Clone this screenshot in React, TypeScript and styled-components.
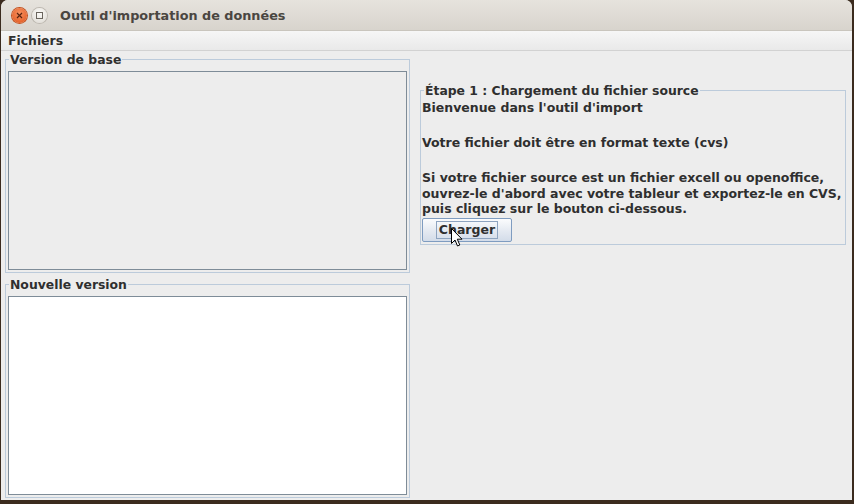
import styled, { createGlobalStyle } from "styled-components";

const GlobalStyle = createGlobalStyle`
  html, body {
    margin: 0;
    padding: 0;
    width: 854px;
    height: 504px;
    overflow: hidden;
    background: #3b2b1e;
    font-family: "DejaVu Sans", "Liberation Sans", sans-serif;
  }
`;

const Window = styled.div`
  margin-left: 1px;
  width: 851px;
  height: 500px;
  display: flex;
  flex-direction: column;
  background: #ededed;
  border-radius: 7px 7px 0 0;
  overflow: hidden;
`;

const TitleBar = styled.div`
  height: 30px;
  display: flex;
  align-items: center;
  padding-left: 11px;
  gap: 5px;
  background: linear-gradient(#e6e3dd, #d8d4cd);
  border-bottom: 1px solid #c9c5bd;
`;

const CircleBtn = styled.div<{ $close?: boolean }>`
  width: 15px;
  height: 15px;
  border-radius: 50%;
  display: flex;
  align-items: center;
  justify-content: center;
  background: ${(p) =>
    p.$close
      ? "radial-gradient(circle at 50% 35%, #f6905e, #e0551c)"
      : "radial-gradient(circle at 50% 35%, #fbfaf8, #dcd8d1)"};
  box-shadow: 0 0 0 1px ${(p) => (p.$close ? "#c4521f" : "#bdb8b0")};
`;

const Title = styled.div`
  margin-left: 8px;
  font-size: 12.8px;
  font-weight: bold;
  color: #4a4641;
  font-family: "DejaVu Sans", sans-serif;
`;

const MenuBar = styled.div`
  height: 19px;
  display: flex;
  align-items: center;
  padding-left: 7px;
  background: linear-gradient(#f6f6f6, #e9e9e9);
  border-bottom: 1px solid #d2d2d2;
`;

const MenuItem = styled.span`
  font-size: 12.4px;
  font-weight: bold;
  color: #2f2f2f;
`;

const Content = styled.div`
  flex: 1;
  display: grid;
  grid-template-columns: 405px 426px;
  column-gap: 10px;
  padding: 8px 0 2px 4px;
`;

const LeftColumn = styled.div`
  display: flex;
  flex-direction: column;
  gap: 11px;
`;

const Titled = styled.div<{ $fill?: boolean }>`
  position: relative;
  border: 1px solid #bccbdb;
  display: flex;
  flex-direction: column;
  flex: ${(p) => (p.$fill ? 1 : "none")};
`;

const Legend = styled.span`
  position: absolute;
  top: -8px;
  left: 3px;
  padding: 0 1px;
  background: #ededed;
  font-size: 12.4px;
  line-height: 16px;
  font-weight: bold;
  color: #2f2f2f;
`;

const TextArea = styled.div<{ $white?: boolean }>`
  flex: 1;
  margin: 11px 2px 2px 2px;
  border: 1px solid #7e8c98;
  background: ${(p) => (p.$white ? "#ffffff" : "#ededed")};
`;

const RightColumn = styled.div`
  padding-top: 31px;
`;

const StepBody = styled.div`
  padding: 9px 2px 2px 1px;
  display: flex;
  flex-direction: column;
  align-items: flex-start;
`;

const Label = styled.div<{ $gap?: number }>`
  margin-top: ${(p) => p.$gap ?? 0}px;
  font-size: 12.5px;
  line-height: 15.5px;
  font-weight: bold;
  color: #2f2f2f;
  white-space: nowrap;
`;

const Button = styled.button`
  position: relative;
  margin-top: 1px;
  width: 90px;
  height: 24px;
  padding: 2px;
  border: 1px solid #7f9cc0;
  border-radius: 2px;
  background: linear-gradient(#fbfcfd, #e4e9f1 55%, #d3dce9);
  display: flex;
  align-items: center;
  justify-content: center;
  font-family: "DejaVu Sans", sans-serif;
  font-size: 12.5px;
  font-weight: bold;
  color: #2f2f2f;
`;

const Focus = styled.span`
  border: 1px solid #8ea4c0;
  padding: 1px 2px;
  line-height: 14px;
`;

const Cursor = styled.svg`
  position: absolute;
  left: 28px;
  top: 9px;
`;

export default function App() {
  return (
    <>
      <GlobalStyle />
      <Window>
        <TitleBar>
          <CircleBtn $close>
            <svg width="7" height="7" viewBox="0 0 7 7">
              <path d="M1 1 L6 6 M6 1 L1 6" stroke="#5a2410" strokeWidth="1.2" />
            </svg>
          </CircleBtn>
          <CircleBtn>
            <svg width="7" height="7" viewBox="0 0 7 7">
              <rect x="0.5" y="0.5" width="6" height="6" fill="none" stroke="#6a655e" strokeWidth="1" />
            </svg>
          </CircleBtn>
          <Title>Outil d'importation de données</Title>
        </TitleBar>
        <MenuBar>
          <MenuItem>Fichiers</MenuItem>
        </MenuBar>
        <Content>
          <LeftColumn>
            <Titled $fill>
              <Legend>Version de base</Legend>
              <TextArea />
            </Titled>
            <Titled $fill>
              <Legend>Nouvelle version</Legend>
              <TextArea $white />
            </Titled>
          </LeftColumn>
          <RightColumn>
            <Titled>
              <Legend>Étape 1 : Chargement du fichier source</Legend>
              <StepBody>
                <Label>Bienvenue dans l'outil d'import</Label>
                <Label $gap={19.5}>Votre fichier doit être en format texte (cvs)</Label>
                <Label $gap={19.5}>
                  Si votre fichier source est un fichier excell ou openoffice,
                  <br />
                  ouvrez-le d'abord avec votre tableur et exportez-le en CVS,
                  <br />
                  puis cliquez sur le bouton ci-dessous.
                </Label>
                <Button>
                  <Focus>Charger</Focus>
                  <Cursor width="12" height="19" viewBox="0 0 12 19">
                    <path
                      d="M0.5 0.5 L0.5 15.5 L4 12 L6.5 18 L8.8 17 L6.3 11.2 L11 11.2 Z"
                      fill="#ffffff"
                      stroke="#000000"
                      strokeWidth="1"
                      strokeLinejoin="round"
                    />
                  </Cursor>
                </Button>
              </StepBody>
            </Titled>
          </RightColumn>
        </Content>
      </Window>
    </>
  );
}
